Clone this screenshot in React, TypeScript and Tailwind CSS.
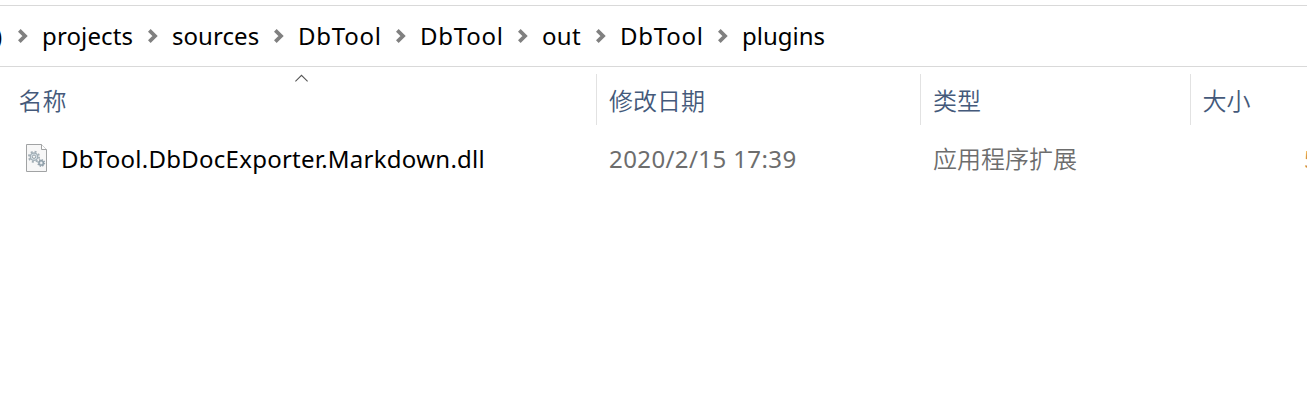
function Chevron() {
  return (
    <svg className="mr-[14px] h-[14px] w-[10px] shrink-0" viewBox="0 0 10 14" fill="none">
      <path d="M1.3 1.4 L7 7 L1.3 12.6" stroke="#808080" strokeWidth="3.8" />
    </svg>
  );
}

const crumbs = [
  { name: "projects", cell: "w-[130px] tracking-[0.13px]" },
  { name: "sources", cell: "w-[126px] tracking-[0.05px]" },
  { name: "DbTool", cell: "w-[122px] tracking-[0.75px]" },
  { name: "DbTool", cell: "w-[122px] tracking-[0.75px]" },
  { name: "out", cell: "w-[78px] tracking-[0.3px]" },
  { name: "DbTool", cell: "w-[122px] tracking-[0.75px]" },
  { name: "plugins", cell: "w-[122px]" },
];

function FileIcon() {
  return (
    <svg className="h-7 w-[21px] shrink-0" viewBox="0 0 21 28" fill="none">
      <path d="M.5 .5 H15.5 L20.5 5.5 V27.5 H.5 Z" fill="#f7f7f7" stroke="#a1a3a4" />
      <path d="M15.5 .5 V5.5 H20.5" fill="#fff" stroke="#a1a3a4" />
      <circle cx="8" cy="12.7" r="5.1" stroke="#a3afb6" strokeWidth="1.8" strokeDasharray="2 2.005" />
      <circle cx="8" cy="12.7" r="3.7" fill="#dce5ea" stroke="#a3b0b8" strokeWidth="1.3" />
      <circle cx="8" cy="12.7" r="1.7" fill="#f7f7f7" stroke="#94a1a9" />
      <circle cx="15.2" cy="18.9" r="3.3" stroke="#97a5af" strokeWidth="1.4" strokeDasharray="1.4 1.19" />
      <circle cx="15.2" cy="18.9" r="2.3" fill="#c5d1d9" stroke="#8d9ca6" strokeWidth="1.3" />
      <circle cx="15.2" cy="18.9" r=".9" fill="#f7f7f7" />
    </svg>
  );
}

export default function App() {
  return (
    <div className="h-[405px] w-[1307px] overflow-hidden bg-white pt-[5px] font-['Noto_Sans','Noto_Sans_CJK_SC',sans-serif] text-2xl">
      <nav className="flex h-[62px] items-center border-y border-[#d9d9d9] text-black">
        <div className="flex w-[18px] shrink-0 justify-start">
          <span className="-ml-[5px] w-[7px]">)</span>
        </div>
        <Chevron />
        {crumbs.map((crumb, i) => (
          <div key={i} className={`flex shrink-0 items-center justify-between whitespace-nowrap ${crumb.cell}`}>
            <span>{crumb.name}</span>
            {i < crumbs.length - 1 && <Chevron />}
          </div>
        ))}
      </nav>
      <div className="flex h-[65px] pt-[7px] font-['Noto_Sans_CJK_SC',sans-serif] font-[350] text-[#44597a]">
        <div className="relative flex h-[51px] w-[597px] items-center border-r border-[#e2e2e2] pl-[18.5px]">
          名称
          <svg className="absolute left-[295px] top-0 h-[9px] w-[13px]" viewBox="0 0 13 9" fill="none">
            <path d="M.4 7.4 L6.5 1.3 L12.6 7.4" stroke="#555" strokeWidth="1.1" />
          </svg>
        </div>
        <div className="flex h-[51px] w-[324px] items-center border-r border-[#e2e2e2] pl-3">修改日期</div>
        <div className="flex h-[51px] w-[270px] items-center border-r border-[#e2e2e2] pl-3">类型</div>
        <div className="flex h-[51px] items-center pl-[11.5px]">大小</div>
      </div>
      <div className="flex h-[52px] items-center text-[#6d6d6d]">
        <div className="flex w-[609px] shrink-0 items-center pl-[26px] text-black">
          <FileIcon />
          <span className="ml-[14px] pt-0.5 tracking-[0.26px]">DbTool.DbDocExporter.Markdown.dll</span>
        </div>
        <div className="w-[324px] shrink-0 pt-0.5 tracking-[0.4px]">2020/2/15 17:39</div>
        <div className="w-[371px] shrink-0 font-['Noto_Sans_CJK_SC',sans-serif] font-[350]">应用程序扩展</div>
        <div className="w-[3px] shrink-0 overflow-hidden whitespace-nowrap pt-0.5 text-[#c98a4a]">5</div>
      </div>
    </div>
  );
}
